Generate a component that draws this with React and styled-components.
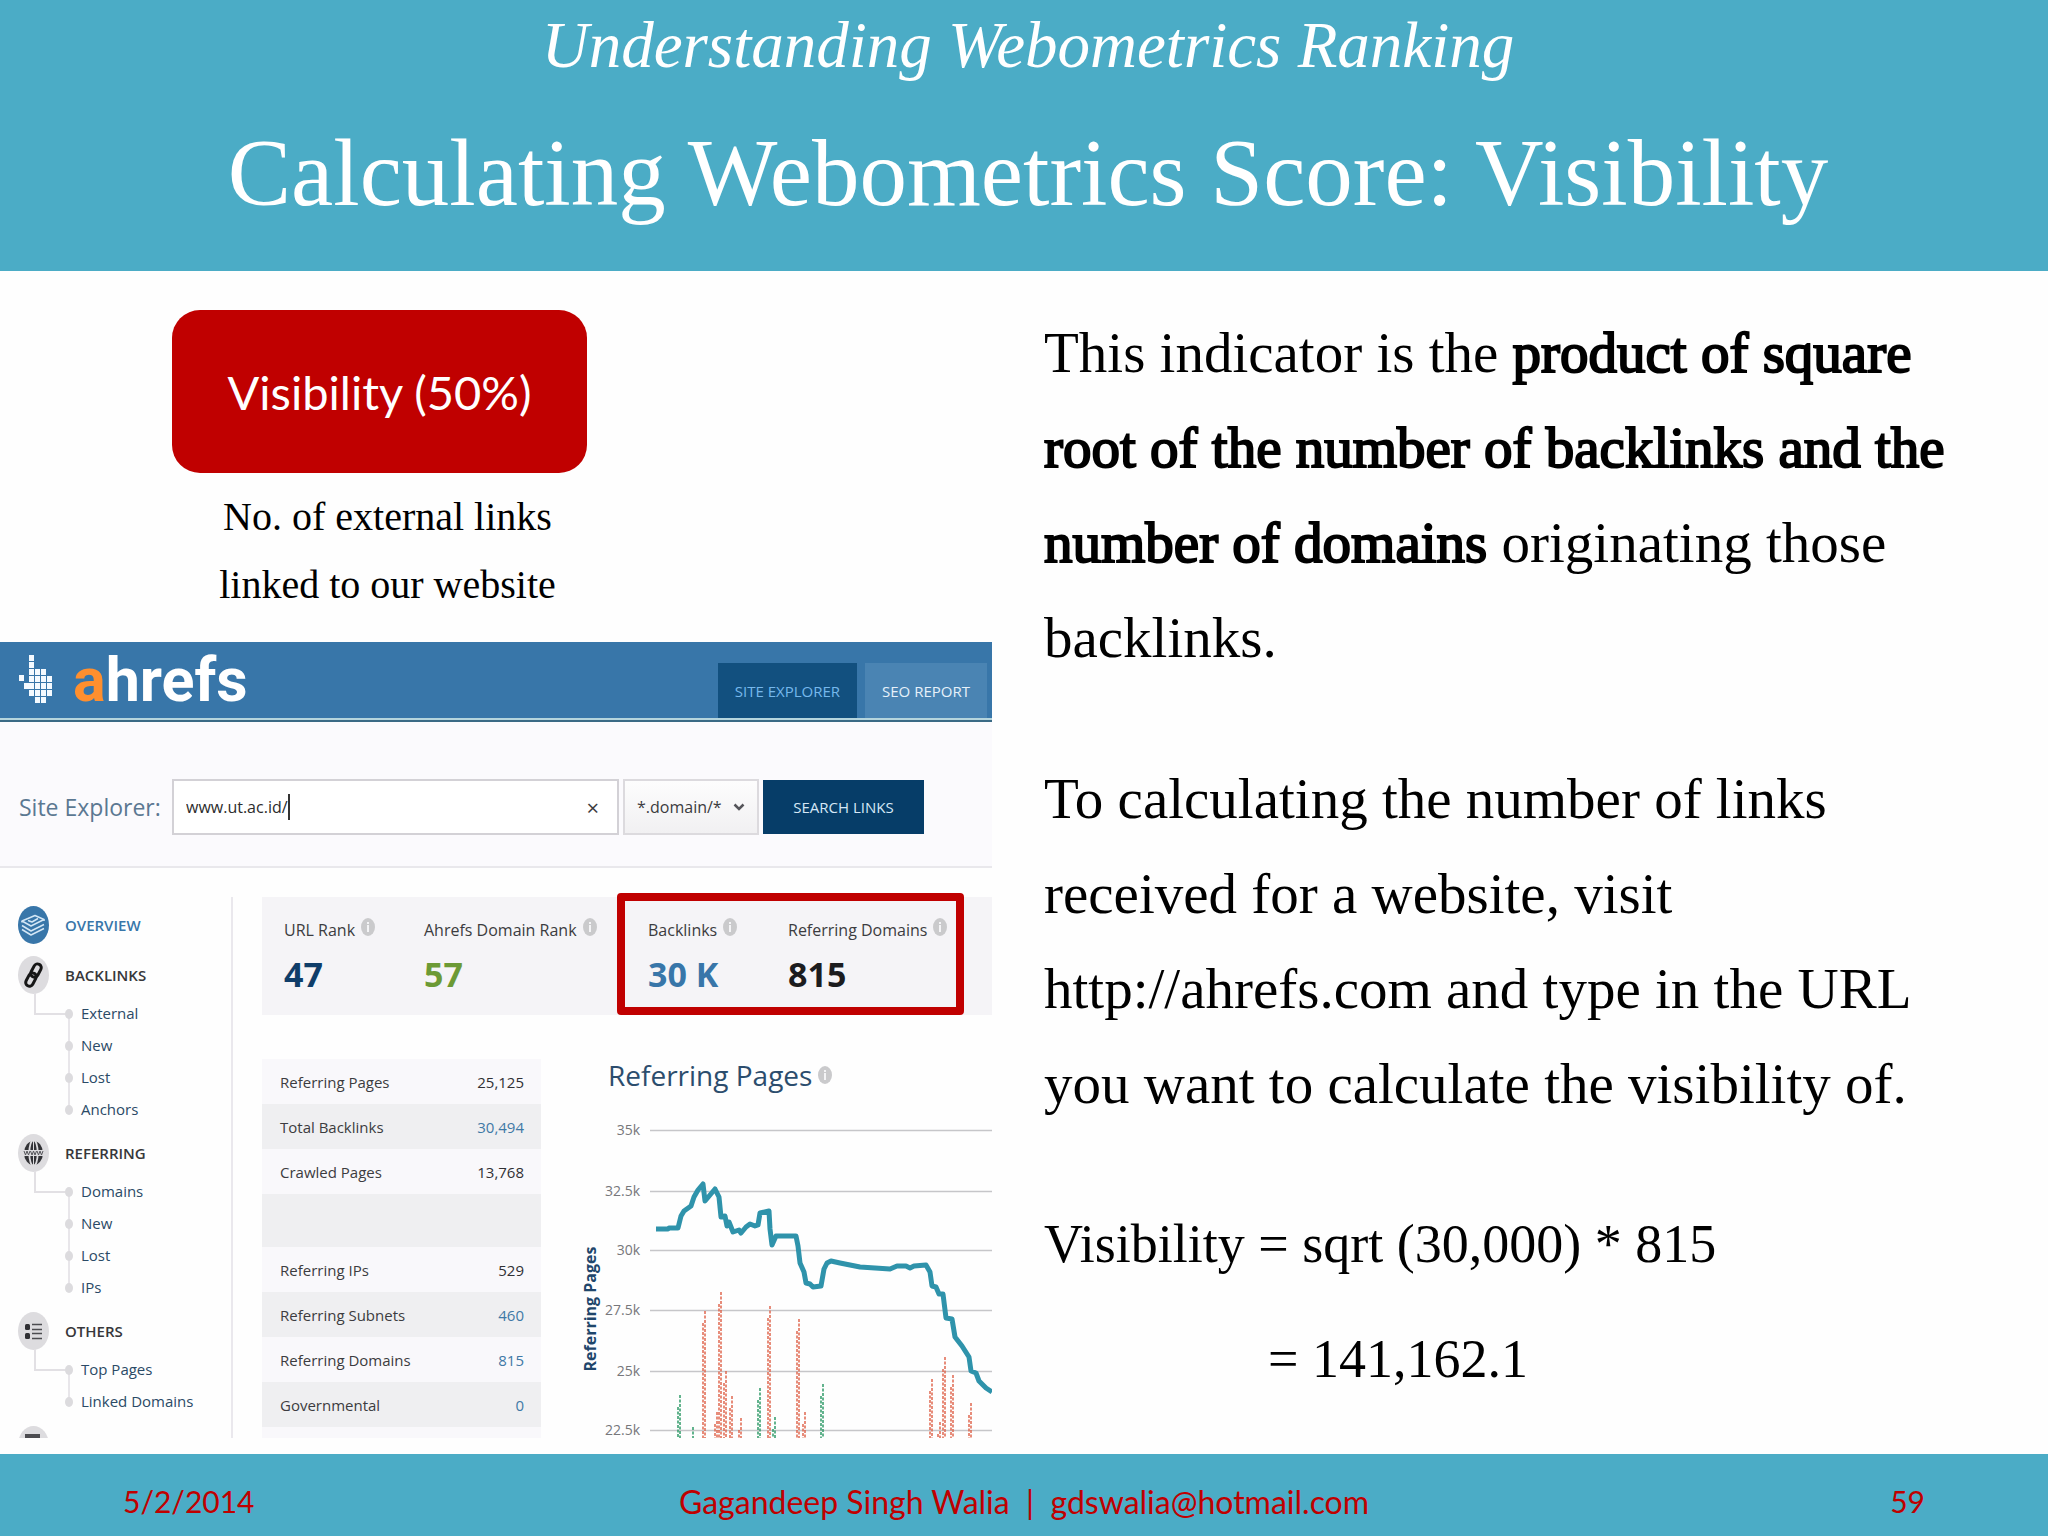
import styled, { createGlobalStyle } from "styled-components";

const GlobalStyle = createGlobalStyle`
  * {
    box-sizing: border-box;
  }
  body {
    margin: 0;
    background: #fefefe;
    color: #000;
    font-family: "Liberation Serif", "Times New Roman", serif;
  }
  h1, h2, p, ul, dl, dd {
    margin: 0;
    padding: 0;
  }
  ul {
    list-style: none;
  }
  a {
    color: inherit;
    text-decoration: none;
  }
  button, input, select {
    font: inherit;
    color: inherit;
    border: 0;
    padding: 0;
    background: none;
  }
`;

const Slide = styled.div`
  min-height: 100vh;
  display: flex;
  flex-direction: column;
`;

// 상단 타이틀
const SlideHeader = styled.header`
  background: #4bacc6;
  color: #fff;
  text-align: center;
  padding: 7px 0 8px 8px;
`;
const Chapter = styled.p`
  font-size: 65px;
  font-style: italic;
  line-height: 76px;
`;
const Title = styled.h1`
  font-size: 95px;
  font-weight: 400;
  line-height: 180px;
`;

const SlideBody = styled.main`
  flex: 1;
  display: grid;
  grid-template-columns: 992fr 1056fr;
`;
const LeftColumn = styled.section`
  padding: 39px 0 16px;
`;
const Indicator = styled.div`
  width: 415px;
  margin: 0 0 23px 172px;
`;
const IndicatorBadge = styled.div`
  height: 163px;
  display: flex;
  align-items: center;
  justify-content: center;
  border-radius: 28px;
  background: #c00000;
  color: #fff;
  font-family: Lato, sans-serif;
  font-size: 47px;
`;
const IndicatorNote = styled.p`
  padding: 10px 0 0 16px;
  font-size: 40px;
  line-height: 68px;
  text-align: center;
`;

const Explanation = styled.section`
  padding: 34px 40px 0 52px;
  font-size: 57px;
  line-height: 95px;
  white-space: nowrap;
`;
const Paragraph = styled.p`
  margin-bottom: 66px;
`;
const Formula = styled.p`
  margin-bottom: 20px;
  font-size: 54px;
`;
const FormulaResult = styled.p`
  padding-left: 224px;
  font-size: 54px;
`;
// 굵은 글꼴 대신 외곽선으로 두께만 준다
const Strong = styled.strong`
  font-weight: 400;
  -webkit-text-stroke: 2px #000;
`;

const SlideFooter = styled.footer`
  display: grid;
  grid-template-columns: 1fr auto 1fr;
  align-items: center;
  padding: 12px 123px 0;
  height: 82px;
  background: #4bacc6;
  color: #c00000;
  font-family: Lato, sans-serif;
  font-size: 30px;
  white-space: pre;
`;
const Author = styled.span`
  font-size: 32px;
`;
const PageNumber = styled.span`
  text-align: right;
`;

// ahrefs 화면
const Ahrefs = styled.div`
  height: 796px;
  overflow: hidden;
  font-family: "Open Sans", "Noto Sans", sans-serif;
  font-size: 15px;
  color: #3c3c40;
`;
const TopBar = styled.div`
  height: 80px;
  display: flex;
  align-items: flex-end;
  padding: 0 5px 2px 18px;
  background: #3876a9;
  border-bottom: 2px solid #3a6a85;
  box-shadow: inset 0 -2px #b5d5dd;
`;
const HandLogo = styled.svg`
  width: 36px;
  height: 50px;
  margin-bottom: 13px;
`;
const Logo = styled.a`
  margin: 0 auto 0 19px;
  font-family: Roboto, sans-serif;
  font-size: 61px;
  font-weight: 700;
  line-height: 76px;
  color: #fff;
  & span {
    color: #ff8f2e;
  }
`;
const TopTab = styled.a`
  height: 55px;
  margin-left: 8px;
  padding: 0 17px;
  display: flex;
  align-items: center;
  background: ${(props) => (props.$active ? "#12507f" : "#4a84b3")};
  color: ${(props) => (props.$active ? "#76b8ec" : "#e6f1fa")};
`;

const SearchRow = styled.form`
  height: 146px;
  display: flex;
  align-items: center;
  gap: 4px;
  padding: 26px 19px 0;
  background: #fbfafd;
  border-bottom: 2px solid #e9e8ec;
  & > label {
    width: 149px;
    font-size: 23px;
    color: #5b7892;
  }
`;
const SearchBox = styled.div`
  width: 447px;
  height: 56px;
  display: flex;
  align-items: center;
  padding: 0 18px 0 12px;
  border: 2px solid #d3d1d6;
  background: #fff;
  & input {
    field-sizing: content;
    outline: 0;
    font-size: 16px;
    color: #2c2c2c;
  }
  & button {
    margin-left: auto;
    font-size: 22px;
    line-height: 22px;
  }
`;
const Caret = styled.span`
  width: 2px;
  height: 26px;
  background: #333;
`;
const ModeBox = styled.div`
  width: 136px;
  height: 56px;
  display: flex;
  align-items: center;
  justify-content: space-between;
  padding: 0 12px;
  border: 2px solid #dcdade;
  background: linear-gradient(#fdfdfd, #f1f0f2);
  & select {
    appearance: none;
    outline: 0;
    width: 88px;
    font-size: 16px;
  }
`;
const SearchButton = styled.button`
  && {
    width: 161px;
    height: 54px;
    background: #063d68;
    color: #d5e8f6;
  }
`;

const Workspace = styled.div`
  display: flex;
  padding-top: 29px;
`;
const SideNav = styled.nav`
  width: 233px;
  height: 544px;
  padding: 9px 0 0 18px;
  border-right: 2px solid #eae8ed;
`;
const NavHead = styled.a`
  height: 38px;
  margin-bottom: ${(props) => (props.$alone ? "12px" : "3px")};
  display: flex;
  align-items: center;
  gap: 16px;
  font-weight: 600;
  color: ${(props) => (props.$active ? "#3876a9" : "#37373a")};
  & svg {
    width: 31px;
    height: 38px;
  }
`;
const NavList = styled.ul`
  margin: 0 0 9px 16px;
`;
const NavItem = styled.li`
  position: relative;
  height: 32px;
  padding-left: 47px;
  font-weight: 500;
  line-height: 32px;
  color: #2b4a66;
  /* 점 */
  &::before {
    content: "";
    position: absolute;
    z-index: 1;
    left: 31px;
    top: 12px;
    width: 8px;
    height: 10px;
    border-radius: 50%;
    background: #dcdbde;
  }
  /* 점 사이를 잇는 선 */
  &:not(:last-child)::after {
    content: "";
    position: absolute;
    left: 34px;
    top: 16px;
    height: 32px;
    border-left: 2px solid #e8e6ea;
  }
`;
const Elbow = styled.span`
  position: absolute;
  left: 0;
  top: -4px;
  width: 32px;
  height: 22px;
  border: solid #e2e0e4;
  border-width: 0 0 2px 2px;
`;

const Report = styled.div`
  flex: 1;
  min-width: 0;
  padding-left: 29px;
`;
const Ranks = styled.div`
  height: 118px;
  display: flex;
  margin-bottom: 44px;
  padding-left: 22px;
  background: #f5f4f7;
`;
const Rank = styled.dl`
  width: ${(props) => props.$width}px;
  flex: none;
  padding-top: 21px;
  & dt {
    display: flex;
    gap: 6px;
    line-height: 24px;
    font-size: 16px;
    white-space: nowrap;
  }
  & dd {
    font-size: 34px;
    font-weight: 700;
    line-height: 64px;
    color: ${(props) => props.$color};
  }
`;
const Highlight = styled.div`
  width: 347px;
  height: 122px;
  margin-top: -4px;
  display: flex;
  padding-left: 23px;
  border: 8px solid #c00000;
  border-radius: 4px;
  & dl {
    padding-top: 17px;
  }
`;
const InfoSvg = styled.svg`
  width: 14px;
  height: 18px;
  flex: none;
`;

const Columns = styled.div`
  display: flex;
`;
const Metrics = styled.table`
  width: 279px;
  flex: none;
  align-self: flex-start;
  border-collapse: collapse;
  & tr {
    height: 45px;
    background: #f9f8fb;
  }
  & tr:nth-child(even) {
    background: #efeff1;
  }
  & th {
    padding: 0 0 0 18px;
    font-weight: 400;
    text-align: left;
  }
  & td {
    padding: 0 17px 0 0;
    text-align: right;
  }
`;
const GapRow = styled.tr`
  && {
    height: 53px;
  }
`;
const MetricValue = styled.td`
  font-weight: 500;
  color: ${(props) => (props.$link ? "#3f79a6" : "#303034")};
`;
const ChartArea = styled.section`
  flex: 1;
  min-width: 0;
  padding-left: 29px;
`;
const ChartTitle = styled.h2`
  height: 42px;
  display: flex;
  align-items: center;
  gap: 6px;
  padding: 0 0 10px 38px;
  font-size: 28px;
  font-weight: 400;
  color: #2c4d6d;
`;
const ChartSvg = styled.svg`
  display: block;
  width: 100%;
  & text {
    font-size: 14px;
    fill: #77777b;
    text-anchor: end;
  }
  & text.axis {
    font-size: 16px;
    font-weight: 700;
    fill: #1f466b;
    text-anchor: middle;
  }
`;

const handCells = [
  [11, 0], [11, 7], [11, 14], [17, 14], [23, 14],
  [1, 20], [11, 21], [17, 21], [23, 21], [29, 21],
  [6, 28], [11, 28], [17, 28], [23, 28], [29, 28],
  [11, 35], [17, 35], [23, 35], [29, 35],
  [17, 42], [23, 42],
];

const navGroups = [
  { title: "BACKLINKS", icon: "link", items: ["External", "New", "Lost", "Anchors"] },
  { title: "REFERRING", icon: "globe", items: ["Domains", "New", "Lost", "IPs"] },
  { title: "OTHERS", icon: "list", items: ["Top Pages", "Linked Domains"] },
];

// null은 빈 줄
const metrics = [
  { name: "Referring Pages", value: "25,125" },
  { name: "Total Backlinks", value: "30,494", link: true },
  { name: "Crawled Pages", value: "13,768" },
  null,
  { name: "Referring IPs", value: "529" },
  { name: "Referring Subnets", value: "460", link: true },
  { name: "Referring Domains", value: "815", link: true },
  { name: "Governmental", value: "0", link: true },
  null,
];

const gridLines = [
  ["35k", 29], ["32.5k", 90], ["30k", 149], ["27.5k", 209], ["25k", 270], ["22.5k", 329],
];

// [x, top, color]
const red = "#e0674f";
const green = "#2f9a68";
const bars = [
  [110, 294, green], [123, 326, green], [135, 210, red], [147, 311, red],
  [151, 191, red], [156, 270, red], [162, 295, red], [171, 317, red],
  [190, 287, green], [200, 205, red], [205, 316, green], [229, 218, red],
  [235, 311, red], [253, 283, green], [362, 278, red], [370, 321, red],
  [375, 256, red], [383, 274, red], [401, 302, red],
];

const linePoints =
  "86,128 98,128 99,127 108,127 111,115 114,110 121,105 124,96 128,89 133,83 135,100 140,94 145,88 149,96 151,116 155,115 157,125 159,121 163,131 169,129 171,132 176,126 180,123 185,125 188,124 190,112 199,110 200,128 202,144 206,135 226,135 228,145 230,162 234,171 236,182 240,183 243,186 251,185 254,168 257,162 261,160 270,162 280,164 290,166 305,167 320,168 327,165 336,165 340,167 344,165 356,164 360,171 362,185 366,186 369,193 373,193 376,217 382,218 385,236 392,245 399,256 401,270 406,272 409,280 416,287 422,291";

function InfoIcon() {
  return (
    <InfoSvg viewBox="0 0 14 18" aria-hidden="true">
      <ellipse cx="7" cy="9" rx="7" ry="9" fill="#cacacc" />
      <rect x="6" y="4" width="2" height="2" fill="#f4f4f6" />
      <rect x="6" y="7" width="2" height="7" fill="#f4f4f6" />
    </InfoSvg>
  );
}

function NavIcon({ name }) {
  return (
    <svg viewBox="0 0 31 38" aria-hidden="true">
      <ellipse
        cx="15.5"
        cy="19"
        rx="15.5"
        ry="19"
        fill={name === "layers" ? "#3876a9" : "#dddcdf"}
      />
      {name === "layers" && (
        <g fill="none" stroke="#d3e6f5" strokeWidth="1.5" strokeLinejoin="round">
          <path d="M4 15 17 9.500 26 13.500 13 20Z" />
          <path d="M10 14.500 14 16 20 12.500" />
          <path d="M4 19.500 13 25 26 18.500M4 23.500 13 29 26 22.500" />
          <path d="M4 15v1.500M26 13.500v1.500" />
        </g>
      )}
      {name === "link" && (
        <g fill="none" stroke="#161616" strokeWidth="3">
          <rect x="14.500" y="7.500" width="7.500" height="14" rx="3.700" transform="rotate(28 18 14)" />
          <rect x="9.500" y="16.500" width="7.500" height="14" rx="3.700" transform="rotate(28 13 23)" />
        </g>
      )}
      {name === "globe" && (
        <g>
          <ellipse cx="15.500" cy="19" rx="9.500" ry="12" fill="#323236" />
          <ellipse cx="15.500" cy="19" rx="4.200" ry="13" fill="none" stroke="#dddcdf" strokeWidth="1.800" />
          <path d="M15.500 6v26" stroke="#dddcdf" strokeWidth="1" />
          <rect x="5" y="16" width="21" height="6" fill="#dddcdf" />
          <path d="M6 17l1.500 4 1.500-4 1.500 4 1.500-4M12.500 17l1.500 4 1.500-4 1.500 4 1.500-4M19 17l1.500 4 1.500-4 1.500 4 1.500-4" stroke="#55555a" strokeWidth="1" fill="none" />
        </g>
      )}
      {name === "list" && (
        <g fill="#2f2f33">
          <rect x="7" y="12" width="5" height="6" rx="1.500" />
          <rect x="7" y="21" width="5" height="6" rx="1.500" />
          <path d="M14 12.500h10M14 17.500h10M14 21.500h10M14 26.500h10" stroke="#4c4c50" strokeWidth="1.500" />
        </g>
      )}
      {name === "bar" && <rect x="7" y="8" width="15" height="4" fill="#4c4c50" />}
    </svg>
  );
}

function RankItem({ label, value, color, width }) {
  return (
    <Rank $color={color} $width={width}>
      <dt>
        {label} <InfoIcon />
      </dt>
      <dd>{value}</dd>
    </Rank>
  );
}

function Chart() {
  return (
    <ChartSvg viewBox="0 0 422 338" role="img" aria-label="Referring Pages">
      {gridLines.map(([label, y]) => (
        <g key={label}>
          <text x="70" y={y + 5}>{label}</text>
          <path d={`M80 ${y + 0.5}H422`} stroke="#c6c6c9" strokeWidth="1.500" />
        </g>
      ))}
      <text className="axis" transform="translate(26 208) rotate(-90)">
        Referring Pages
      </text>
      {bars.map(([x, top, color]) => (
        <path
          key={x}
          d={`M${x} ${top}V338M${x - 2} ${top + 12}V338`}
          stroke={color}
          strokeWidth="1.500"
          strokeDasharray="3 1.500"
        />
      ))}
      <polyline
        points={linePoints}
        fill="none"
        stroke="#2f93ab"
        strokeWidth="5"
        strokeLinejoin="round"
      />
    </ChartSvg>
  );
}

function AhrefsPanel() {
  return (
    <Ahrefs>
      <TopBar>
        <HandLogo viewBox="0 0 36 50" aria-hidden="true">
          {handCells.map(([x, y]) => (
            <rect key={`${x}-${y}`} x={x} y={y} width="5" height="6" fill="#f4faff" />
          ))}
        </HandLogo>
        <Logo href="#home">
          <span>a</span>hrefs
        </Logo>
        <TopTab href="#explorer" $active>SITE EXPLORER</TopTab>
        <TopTab href="#report">SEO REPORT</TopTab>
      </TopBar>
      <SearchRow onSubmit={(e) => e.preventDefault()}>
        <label htmlFor="site">Site Explorer:</label>
        <SearchBox>
          <input id="site" type="text" defaultValue="www.ut.ac.id/" />
          <Caret />
          <button type="button" aria-label="Clear">×</button>
        </SearchBox>
        <ModeBox>
          <select aria-label="Mode" defaultValue="domain">
            <option value="domain">*.domain/*</option>
          </select>
          <svg width="12" height="8" viewBox="0 0 12 8" aria-hidden="true">
            <path d="M1.500 1.500 6 6l4.500-4.500" fill="none" stroke="#55555a" strokeWidth="2.500" />
          </svg>
        </ModeBox>
        <SearchButton type="submit">SEARCH LINKS</SearchButton>
      </SearchRow>
      <Workspace>
        <SideNav>
          <NavHead href="#overview" $active $alone>
            <NavIcon name="layers" />
            OVERVIEW
          </NavHead>
          {navGroups.map((group) => (
            <div key={group.title}>
              <NavHead href={`#${group.icon}`}>
                <NavIcon name={group.icon} />
                {group.title}
              </NavHead>
              <NavList>
                {group.items.map((item, index) => (
                  <NavItem key={item}>
                    {index === 0 && <Elbow />}
                    <a href={`#${group.icon}-${index}`}>{item}</a>
                  </NavItem>
                ))}
              </NavList>
            </div>
          ))}
          <NavHead as="div">
            <NavIcon name="bar" />
          </NavHead>
        </SideNav>
        <Report>
          <Ranks>
            <RankItem label="URL Rank" value="47" color="#0f3d69" width={140} />
            <RankItem label="Ahrefs Domain Rank" value="57" color="#6c9a35" width={193} />
            <Highlight>
              <RankItem label="Backlinks" value="30 K" color="#3876a9" width={140} />
              <RankItem label="Referring Domains" value="815" color="#1c1c1e" width={160} />
            </Highlight>
          </Ranks>
          <Columns>
            <Metrics>
              <tbody>
                {metrics.map((row, index) =>
                  row ? (
                    <tr key={row.name}>
                      <th scope="row">{row.name}</th>
                      <MetricValue $link={row.link}>{row.value}</MetricValue>
                    </tr>
                  ) : (
                    <GapRow key={index}>
                      <td colSpan={2} />
                    </GapRow>
                  )
                )}
              </tbody>
            </Metrics>
            <ChartArea>
              <ChartTitle>
                Referring Pages <InfoIcon />
              </ChartTitle>
              <Chart />
            </ChartArea>
          </Columns>
        </Report>
      </Workspace>
    </Ahrefs>
  );
}

export default function App() {
  return (
    <>
      <GlobalStyle />
      <Slide>
        <SlideHeader>
          <Chapter>Understanding Webometrics Ranking</Chapter>
          <Title>Calculating Webometrics Score: Visibility</Title>
        </SlideHeader>
        <SlideBody>
          <LeftColumn>
            <Indicator>
              <IndicatorBadge>Visibility (50%)</IndicatorBadge>
              <IndicatorNote>
                No. of external links
                <br />
                linked to our website
              </IndicatorNote>
            </Indicator>
            <AhrefsPanel />
          </LeftColumn>
          <Explanation>
            <Paragraph>
              This indicator is the <Strong>product of square</Strong>
              <br />
              <Strong>root of the number of backlinks and the</Strong>
              <br />
              <Strong>number of domains</Strong> originating those
              <br />
              backlinks.
            </Paragraph>
            <Paragraph>
              To calculating the number of links
              <br />
              received for a website, visit
              <br />
              http://ahrefs.com and type in the URL
              <br />
              you want to calculate the visibility of.
            </Paragraph>
            <Formula>Visibility = sqrt (30,000) * 815</Formula>
            <FormulaResult>= 141,162.1</FormulaResult>
          </Explanation>
        </SlideBody>
        <SlideFooter>
          <span>5/2/2014</span>
          <Author>Gagandeep Singh Walia  |  gdswalia@hotmail.com</Author>
          <PageNumber>59</PageNumber>
        </SlideFooter>
      </Slide>
    </>
  );
}
